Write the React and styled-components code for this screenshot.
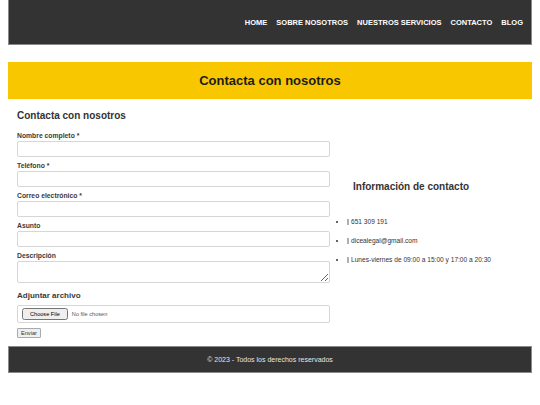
import React from 'react';
import styled, { createGlobalStyle } from 'styled-components';

const GlobalStyle = createGlobalStyle`
	body {
		margin: 0 8px;
		font-family: "Liberation Sans", Arial, sans-serif;
		background: #fff;
		color: #333;
	}
`;

const navItems = ['HOME', 'SOBRE NOSOTROS', 'NUESTROS SERVICIOS', 'CONTACTO', 'BLOG'];

const fields = [
	{ label: 'Nombre completo *', type: 'text' },
	{ label: 'Teléfono *', type: 'tel' },
	{ label: 'Correo electrónico *', type: 'email' },
	{ label: 'Asunto', type: 'text' },
];

const contactInfo = [
	'651 309 191',
	'dicealegal@gmail.com',
	'Lunes-viernes de 09:00 a 15:00 y 17:00 a 20:30',
];

export default function App() {
	return (
		<>
			<GlobalStyle />
			<Header>
				<Nav>
					{navItems.map(item => (
						<NavLink key={item} href='#'>{item}</NavLink>
					))}
				</Nav>
			</Header>

			<Banner>
				<h1>Contacta con nosotros</h1>
			</Banner>

			<Main>
				<FormColumn>
					<FormTitle>Contacta con nosotros</FormTitle>
					<form onSubmit={e => e.preventDefault()}>
						{fields.map(f => (
							<div key={f.label}>
								<Label>{f.label}</Label>
								<Input type={f.type} />
							</div>
						))}
						<Label>Descripción</Label>
						<TextArea />
						<Label big>Adjuntar archivo</Label>
						<FileBox>
							<input type='file' />
						</FileBox>
						<SubmitButton type='submit'>Enviar</SubmitButton>
					</form>
				</FormColumn>

				<InfoColumn>
					<InfoTitle>Información de contacto</InfoTitle>
					<InfoList>
						{contactInfo.map(text => (
							<li key={text}>
								<MissingIcon />
								{text}
							</li>
						))}
					</InfoList>
				</InfoColumn>
			</Main>

			<Footer>© 2023 - Todos los derechos reservados</Footer>
		</>
	);
}

const Header = styled.header`
	box-sizing: border-box;
	height: 45px;
	display: flex;
	align-items: center;
	justify-content: flex-end;
	padding: 0 8px 0 0;
	background: #333;
	border: 1px solid #8a8a8a;
	border-top: none;
`;

const Nav = styled.nav`
	display: flex;
	gap: 9px;
`;

const NavLink = styled.a`
	color: #fff;
	text-decoration: none;
	font-size: 7.5px;
	font-weight: bold;
`;

const Banner = styled.section`
	margin-top: 17px;
	height: 37px;
	display: flex;
	align-items: center;
	justify-content: center;
	background: #f8c700;

	h1 {
		margin: 0;
		font-size: 13px;
		font-weight: bold;
		color: #1c1c1c;
	}
`;

const Main = styled.main`
	display: flex;
	align-items: center;
	padding: 0 9px;
`;

const FormColumn = styled.div`
	width: 313px;
	flex-shrink: 0;
`;

const FormTitle = styled.h2`
	margin: 9.5px 0 9px;
	font-size: 10px;
	line-height: 13px;
	font-weight: bold;
	color: #333;
`;

const Label = styled.label`
	display: block;
	font-size: ${props => props.big ? '8px' : '6.8px'};
	line-height: ${props => props.big ? '10px' : '9px'};
	margin: ${props => props.big ? '7.5px 0 4px' : '0 0 1.5px'};
	font-weight: bold;
	color: #3a3a3a;
`;

const Input = styled.input`
	display: block;
	box-sizing: border-box;
	width: 100%;
	height: 16px;
	margin: 0 0 3.5px;
	border: 1px solid #d6d6d6;
	border-radius: 2px;
	font-size: 7px;
`;

const TextArea = styled.textarea`
	display: block;
	box-sizing: border-box;
	width: 100%;
	height: 22px;
	margin: 0 0 3.5px;
	border: 1px solid #d6d6d6;
	border-radius: 2px;
	font-size: 7px;
`;

const FileBox = styled.div`
	box-sizing: border-box;
	height: 18px;
	display: flex;
	align-items: center;
	padding: 0 4px;
	border: 1px solid #d6d6d6;
	border-radius: 2px;

	input {
		font-size: 5.6px;
		font-family: "Liberation Sans", Arial, sans-serif;
		color: #555;
	}
`;

const SubmitButton = styled.button`
	display: block;
	margin-top: 5px;
	height: 10px;
	padding: 0 3px;
	font-size: 5.6px;
	font-family: "Liberation Sans", Arial, sans-serif;
	line-height: 8px;
	color: #333;
	background: #efefef;
	border: 1px solid #aaa;
	border-radius: 1px;
`;

const InfoColumn = styled.div`
	flex: 1;
	padding-top: 8px;
`;

const InfoTitle = styled.h3`
	margin: 0 0 24.5px 23px;
	font-size: 10px;
	line-height: 12px;
	font-weight: bold;
	color: #333;
`;

const InfoList = styled.ul`
	margin: 0;
	padding-left: 17px;

	li {
		font-size: 6.6px;
		line-height: 9px;
		margin-bottom: 10px;
		color: #333;
	}

	li:last-child {
		margin-bottom: 0;
	}
`;

const MissingIcon = styled.span`
	display: inline-block;
	box-sizing: border-box;
	width: 2px;
	height: 6px;
	margin-right: 2px;
	vertical-align: -1px;
	border: 0.6px solid #b0b0b0;
`;

const Footer = styled.footer`
	box-sizing: border-box;
	margin-top: 8px;
	height: 27px;
	display: flex;
	align-items: center;
	justify-content: center;
	background: #333;
	border: 1px solid #8a8a8a;
	color: #e6e6e6;
	font-size: 7px;
`;
